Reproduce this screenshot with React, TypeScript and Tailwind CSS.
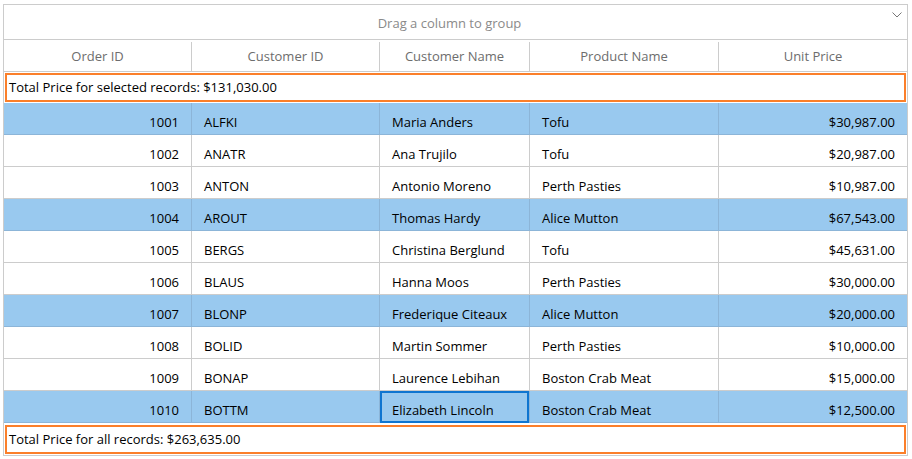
import React from "react";

const rows = [
  ["1001", "ALFKI", "Maria Anders", "Tofu", "$30,987.00", true],
  ["1002", "ANATR", "Ana Trujilo", "Tofu", "$20,987.00", false],
  ["1003", "ANTON", "Antonio Moreno", "Perth Pasties", "$10,987.00", false],
  ["1004", "AROUT", "Thomas Hardy", "Alice Mutton", "$67,543.00", true],
  ["1005", "BERGS", "Christina Berglund", "Tofu", "$45,631.00", false],
  ["1006", "BLAUS", "Hanna Moos", "Perth Pasties", "$30,000.00", false],
  ["1007", "BLONP", "Frederique Citeaux", "Alice Mutton", "$20,000.00", true],
  ["1008", "BOLID", "Martin Sommer", "Perth Pasties", "$10,000.00", false],
  ["1009", "BONAP", "Laurence Lebihan", "Boston Crab Meat", "$15,000.00", false],
  ["1010", "BOTTM", "Elizabeth Lincoln", "Boston Crab Meat", "$12,500.00", true],
] as const;

const font = { fontFamily: '"Open Sans", "Noto Sans", sans-serif' };

export default function App() {
  return (
    <div className="w-[912px] h-[459px] bg-white pt-[4px] pl-[3px]" style={font}>
      <div className="w-[905px] h-[452px] border border-[#cccccc] flex flex-col text-[13px]">
        {/* group drop area */}
        <div className="relative h-[35px] shrink-0 border-b border-[#cccccc] flex items-center justify-center text-[#8a8a8a] pr-[12px] pt-[3px]">
          Drag a column to group
          <svg className="absolute right-[5px] top-[7px]" width="10" height="6" viewBox="0 0 10 6">
            <path d="M0.5 0.5 L5 5 L9.5 0.5" fill="none" stroke="#777" strokeWidth="1" />
          </svg>
        </div>
        {/* header */}
        <div className="h-[32px] shrink-0 border-b border-[#cccccc] flex text-[#6d6d6d] pt-[2px]">
          <div className="w-[188px] border-r border-[#cccccc] flex items-center justify-center">Order ID</div>
          <div className="w-[188px] border-r border-[#cccccc] flex items-center justify-center">Customer ID</div>
          <div className="w-[150px] border-r border-[#cccccc] flex items-center justify-center">Customer Name</div>
          <div className="w-[189px] border-r border-[#cccccc] flex items-center justify-center">Product Name</div>
          <div className="flex-1 flex items-center justify-center">Unit Price</div>
        </div>
        {/* top summary */}
        <div className="h-[31px] shrink-0 p-[1px] flex">
          <div className="flex-1 border-2 border-[#fb7f2a] flex items-center pl-[2px] pt-[1px] text-black">
            Total Price for selected records: $131,030.00
          </div>
        </div>
        {/* rows */}
        {rows.map((r, i) => {
          const sel = r[5];
          const line = sel ? "border-[#8cb5d8]" : "border-[#cccccc]";
          const bg = sel ? "bg-[#99c9ef]" : "bg-white";
          const isCur = i === 9;
          return (
            <div key={r[0]} className={`h-[32px] shrink-0 flex text-black border-b ${line} ${bg}`}>
              <div className={`w-[188px] border-r ${line} flex items-center justify-end pr-[12px] pt-[9px]`}>{r[0]}</div>
              <div className={`w-[188px] border-r ${line} flex items-center pl-[12px] pt-[9px]`}>{r[1]}</div>
              <div className={`w-[150px] border-r ${line} flex items-center pl-[12px] pt-[9px] relative`}>
                {isCur && <div className="absolute left-0 top-0 right-0 -bottom-[1px] border-2 border-[#0f75d0]" />}
                {r[2]}
              </div>
              <div className={`w-[189px] border-r ${line} flex items-center pl-[12px] pt-[9px]`}>{r[3]}</div>
              <div className="flex-1 flex items-center justify-end pr-[12px] pt-[9px]">{r[4]}</div>
            </div>
          );
        })}
        {/* bottom summary */}
        <div className="h-[32px] shrink-0 pt-[2px] pb-[1px] px-[1px] flex">
          <div className="flex-1 border-2 border-[#fb7f2a] flex items-center pl-[2px] text-black">
            Total Price for all records: $263,635.00
          </div>
        </div>
      </div>
    </div>
  );
}
